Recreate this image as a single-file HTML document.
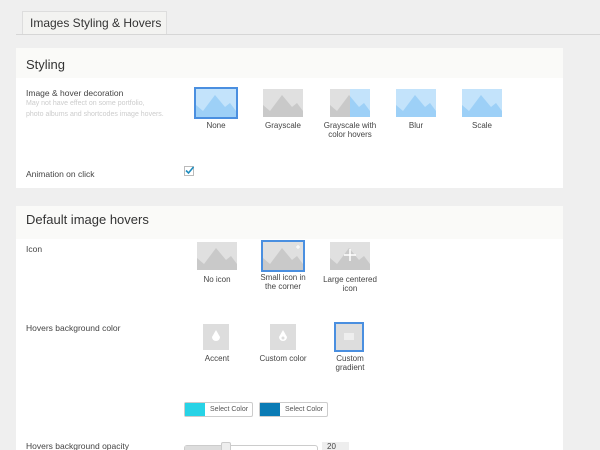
<!DOCTYPE html>
<html><head><style>
html,body{margin:0;width:600px;height:450px;overflow:hidden}
body{background:#efefef;font-family:"Liberation Sans",sans-serif;position:relative;color:#444}
.a{position:absolute}
.tab{left:22px;top:11px;width:145px;height:24px;background:#f3f3f1;border:1px solid #ddd;border-bottom:none;font-size:12px;color:#333;line-height:22px;padding-left:7px;box-sizing:border-box;white-space:nowrap}
.line{left:16px;top:34px;width:584px;height:1px;background:#d6d6d6}
.panel{background:#fff;left:16px;width:547px}
.ph{background:#fafaf8;left:0;top:0;width:547px;height:30px;font-size:13px;color:#333;padding:9px 0 0 10px;box-sizing:border-box}
.lbl{font-size:8.5px;color:#444;white-space:nowrap}
.sub{font-size:7px;color:#ccc;line-height:11px;white-space:nowrap}
.cap{font-size:8px;color:#444;text-align:center;line-height:9px;width:70px}
.btn{height:15px;border:1px solid #ccc;background:#fff;font-size:7px;color:#555;line-height:13px;box-sizing:border-box;border-radius:2px;white-space:nowrap}
</style></head><body>
<div class="a tab">Images Styling &amp; Hovers</div>
<div class="a line"></div>

<div class="a panel" style="top:48px;height:140px">
 <div class="a ph" style="height:30px">Styling</div>
 <div class="a lbl" style="left:10px;top:40px">Image &amp; hover decoration</div>
 <div class="a sub" style="left:10px;top:50px">May not have effect on some portfolio,<br>photo albums and shortcodes image hovers.</div>
 <div class="a lbl" style="left:10px;top:121px">Animation on click</div>
</div>

<div class="a panel" style="top:206px;height:244px">
 <div class="a ph" style="height:33px;padding-top:6px">Default image hovers</div>
 <div class="a lbl" style="left:10px;top:38px">Icon</div>
 <div class="a lbl" style="left:10px;top:117px">Hovers background color</div>
 <div class="a lbl" style="left:10px;top:235px">Hovers background opacity</div>
</div>

<svg class="a" style="left:0;top:0" width="600" height="450">
<defs>
<g id="mb"><rect width="40" height="28" fill="#c3e3fb"/><path d="M0 28V16l7 6 12-16 10 12 5-4 6 8V28z" fill="#9dd0f7"/></g>
<g id="mg"><rect width="40" height="28" fill="#e0e0e0"/><path d="M0 28V16l7 6 12-16 10 12 5-4 6 8V28z" fill="#c9c9c9"/></g>
</defs>
<rect x="184.5" y="166.5" width="9" height="9" fill="#fff" stroke="#bbb"/>
<path d="M186 170.5l2.5 2.5 5-6" fill="none" stroke="#1e8cbe" stroke-width="1.6"/>
<g transform="translate(196,89)"><use href="#mb"/></g>
<rect x="195" y="88" width="42" height="30" fill="none" stroke="#4a8fe0" stroke-width="2"/>
<g transform="translate(263,89)"><use href="#mg"/></g>
<g transform="translate(330,89)"><use href="#mb"/><rect width="20" height="28" fill="#e0e0e0"/><path d="M0 28V16l7 6 12-16 1 1V28z" fill="#c9c9c9"/></g>
<g transform="translate(396,89)"><use href="#mb"/></g>
<g transform="translate(462,89)"><use href="#mb"/></g>

<g transform="translate(197,242)"><use href="#mg"/></g>
<g transform="translate(263,242)"><use href="#mg"/><path d="M35 3v4M33 5h4" stroke="#fff"/></g>
<rect x="262" y="241" width="42" height="30" fill="none" stroke="#4a8fe0" stroke-width="2"/>
<g transform="translate(330,242)"><use href="#mg"/><path d="M20 7v12M14 13h12" stroke="#fff" stroke-width="1.5"/></g>

<rect x="203" y="324" width="26" height="26" fill="#ddd"/>
<path d="M216 330l-4 7a4 4 0 0 0 8 0z" fill="#fff"/>
<rect x="270" y="324" width="26" height="26" fill="#ddd"/>
<path d="M283 330l-4 7a4 4 0 0 0 8 0z" fill="#fff"/><circle cx="283" cy="338" r="1.5" fill="#ddd"/>
<rect x="335" y="323" width="28" height="28" fill="#ddd" stroke="#4a8fe0" stroke-width="2"/>
<rect x="344" y="333" width="10" height="7" fill="#eee"/>
</svg>

<div class="a cap" style="left:181px;top:121px">None</div>
<div class="a cap" style="left:248px;top:121px">Grayscale</div>
<div class="a cap" style="left:315px;top:121px">Grayscale with<br>color hovers</div>
<div class="a cap" style="left:381px;top:121px">Blur</div>
<div class="a cap" style="left:447px;top:121px">Scale</div>

<div class="a cap" style="left:182px;top:275px">No icon</div>
<div class="a cap" style="left:248px;top:273px">Small icon in<br>the corner</div>
<div class="a cap" style="left:315px;top:275px">Large centered<br>icon</div>
<div class="a cap" style="left:182px;top:354px">Accent</div>
<div class="a cap" style="left:248px;top:354px">Custom color</div>
<div class="a cap" style="left:315px;top:354px">Custom<br>gradient</div>

<div class="a btn" style="left:184px;top:402px;width:69px"><span style="display:inline-block;width:20px;height:13px;background:#27d3e6;vertical-align:top"></span> <span style="padding-left:3px">Select Color</span></div>
<div class="a btn" style="left:259px;top:402px;width:69px"><span style="display:inline-block;width:20px;height:13px;background:#0a7bb5;vertical-align:top"></span> <span style="padding-left:3px">Select Color</span></div>

<div class="a" style="left:184px;top:445px;width:132px;height:8px;border:1px solid #ccc;border-radius:3px;background:#fff"></div>
<div class="a" style="left:185px;top:446px;width:38px;height:7px;background:#ddd"></div>
<div class="a" style="left:221px;top:442px;width:8px;height:12px;background:#eee;border:1px solid #ccc;border-radius:2px"></div>
<div class="a" style="left:322px;top:442px;width:27px;height:12px;background:#eee;font-size:8px;padding-left:5px;box-sizing:border-box">20</div>
</body></html>
